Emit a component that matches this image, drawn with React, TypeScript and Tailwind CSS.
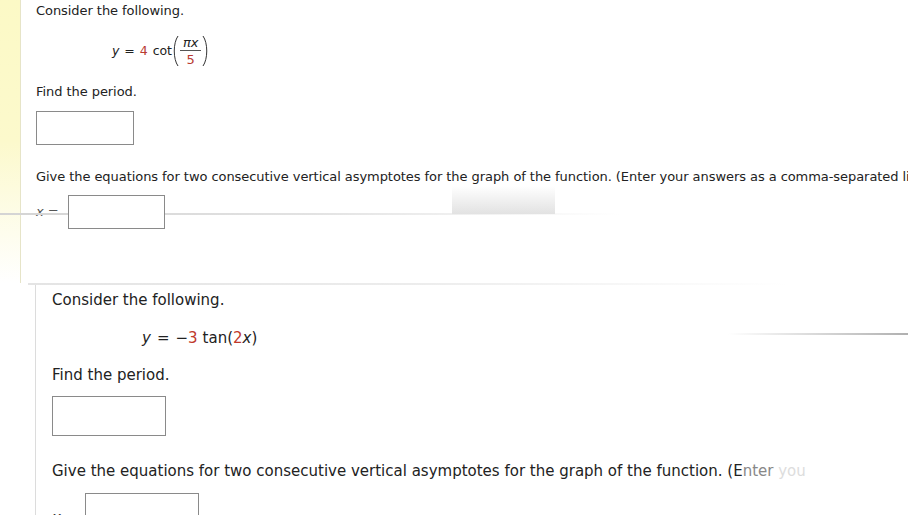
import React from "react";

const font = { fontFamily: '"DejaVu Sans", Verdana, sans-serif' };

function Paren({ side }: { side: "l" | "r" }) {
  return (
    <svg width="7" height="32" viewBox="0 0 7 32" className="shrink-0">
      {side === "l" ? (
        <path d="M6 1 C1 8 1 24 6 31" fill="none" stroke="#333" strokeWidth="1" />
      ) : (
        <path d="M1 1 C6 8 6 24 1 31" fill="none" stroke="#333" strokeWidth="1" />
      )}
    </svg>
  );
}

export default function App() {
  return (
    <div className="relative w-[908px] h-[515px] overflow-hidden bg-white text-[#222]" style={font}>
      {/* Top section */}
      <div className="flex h-[283px]">
        <div className="w-[21px] shrink-0 border-r border-[#e6e4c8] bg-gradient-to-b from-[#fcf9c6] via-[#fcf9cc] to-white" />
        <div className="flex-1 pl-[15px] pt-[3px] text-[13px] leading-[16px] whitespace-nowrap tracking-[-0.06px]">
          <div>Consider the following.</div>
          <div className="mt-[16px] ml-[76px] flex items-center h-[32px] text-[12.5px]">
            <span className="italic">y</span>
            <span className="mx-[5px]">=</span>
            <span className="text-[#b83a32]">4</span>
            <span className="ml-[5px]">cot</span>
            <Paren side="l" />
            <span className="inline-flex flex-col items-center mx-[1px] text-[13px] leading-[13px]">
              <span className="px-[3px] pb-[1px] italic">πx</span>
              <span className="h-px w-full bg-[#555]" />
              <span className="px-[3px] pt-[2px] text-[#b83a32]">5</span>
            </span>
            <Paren side="r" />
          </div>
          <div className="mt-[17px]">Find the period.</div>
          <div className="mt-[11px] w-[98px] h-[34px] border border-[#8a8a8a]" />
          <div className="mt-[24px]">
            Give the equations for two consecutive vertical asymptotes for the graph of the function. (Enter your answers as a comma-separated list.)
          </div>
          <div className="mt-[10px] flex items-center">
            <span className="text-[13px] text-[#555]"><span className="italic">x</span> =</span>
            <div className="ml-[9px] w-[97px] h-[34px] border border-[#8a8a8a] bg-white relative z-10" />
          </div>
        </div>
      </div>

      {/* Bottom section */}
      <div className="ml-[35px] border-l border-[#dcdcdc] pl-[16px] pt-[8px] text-[15px] leading-[18px] whitespace-nowrap">
        <div>Consider the following.</div>
        <div className="mt-[20px] ml-[90px] flex items-center">
          <span className="italic">y</span>
          <span className="mx-[6px]">=</span>
          <span>−</span>
          <span className="text-[#c0392b]">3</span>
          <span className="ml-[5px]">tan(</span>
          <span className="text-[#c0392b]">2</span>
          <span className="italic">x</span>
          <span>)</span>
        </div>
        <div className="mt-[19px]">Find the period.</div>
        <div className="mt-[12px] w-[114px] h-[40px] border border-[#8a8a8a]" />
        <div className="mt-[26px] flex">
          <span>Give the equations for two consecutive vertical asymptotes for the graph of the function. (E</span>
          <span className="text-[#888]">nter</span>
          <span className="text-[#ddd]">&nbsp;you</span>
        </div>
        <div className="mt-[13px] flex items-start">
          <span className="text-[15px] text-[#333] mt-[16px]"><span className="italic">x</span> =</span>
          <div className="ml-[7px] w-[114px] h-[40px] border border-[#8a8a8a]" />
        </div>
      </div>

      {/* Overlay artifacts */}
      <div className="pointer-events-none absolute left-[28px] top-[283px] w-[760px] h-[2px] bg-gradient-to-r from-[#e4e4e4] via-[#ececec] to-transparent" />
      <div className="pointer-events-none absolute left-0 top-[213px] w-[620px] h-[2px] bg-gradient-to-r from-[#d4d4d4] via-[#e2e2e2] to-transparent" />
      <div className="pointer-events-none absolute left-[452px] top-[186px] w-[103px] h-[28px] bg-gradient-to-b from-white to-[#e2e2e2]" />
      <div className="pointer-events-none absolute left-[728px] top-[333px] w-[180px] h-[2px] bg-gradient-to-r from-transparent to-[#b0b0b0]" />
    </div>
  );
}
